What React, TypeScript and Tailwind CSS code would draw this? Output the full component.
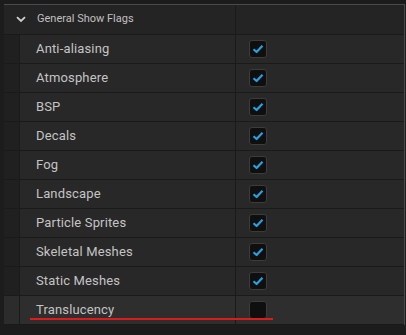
import React from "react";

const flags = [
  { name: "Anti-aliasing", on: true },
  { name: "Atmosphere", on: true },
  { name: "BSP", on: true },
  { name: "Decals", on: true },
  { name: "Fog", on: true },
  { name: "Landscape", on: true },
  { name: "Particle Sprites", on: true },
  { name: "Skeletal Meshes", on: true },
  { name: "Static Meshes", on: true },
  { name: "Translucency", on: false },
];

const Check = ({ on }: { on: boolean }) => (
  <div className="flex h-[18px] w-[18px] items-center justify-center rounded-[3px] border border-[#3c3c3c] bg-[#0f0f0f]">
    {on && (
      <svg width="12" height="10" viewBox="0 0 12 10">
        <path d="M1.5 5.2 L4.6 8 L10.5 1.8" fill="none" stroke="#26a1e3" strokeWidth="2.2" strokeLinejoin="round" />
      </svg>
    )}
  </div>
);

export default function App() {
  return (
    <div className="h-[335px] w-[406px] bg-[#1c1c1c] pl-1 pt-1 font-['Roboto',sans-serif]">
      <div className="w-[401px] border-r border-t border-[#4a4a4a] bg-[#242424]">
        <div className="flex h-[30px] border-b border-[#1a1a1a]">
          <div className="flex w-[232px] items-center border-r border-[#1a1a1a] pl-[12px] text-[11px] text-[#c0c0c0]">
            <svg width="10" height="7" viewBox="0 0 10 7" className="mr-[11px]">
              <path d="M1 1.2 L5 5 L9 1.2" fill="none" stroke="#cfcfcf" strokeWidth="1.8" />
            </svg>
            General Show Flags
          </div>
          <div className="flex-1" />
        </div>
        {flags.map((f, i) => {
          const hover = i === flags.length - 1;
          return (
            <div key={f.name} className="flex h-[29px] border-b border-[#1a1a1a]">
              <div className={`w-4 border-r border-[#1a1a1a] ${hover ? "bg-[#2c2c2c]" : "bg-[#202020]"}`} />
              <div
                className={`relative flex w-[216px] items-center border-r border-[#1a1a1a] pl-4 text-[13px] tracking-[0.15px] text-[#c4c4c4] ${hover ? "bg-[#2e2e2e]" : "bg-[#282828]"}`}
              >
                {f.name}
                {hover && <div className="absolute left-[10px] top-[22px] h-[2px] w-[243px] bg-[#e01a1a]" />}
              </div>
              <div className={`flex flex-1 items-center pl-[13px] ${hover ? "bg-[#2e2e2e]" : "bg-[#282828]"}`}>
                <Check on={f.on} />
              </div>
            </div>
          );
        })}
      </div>
    </div>
  );
}
